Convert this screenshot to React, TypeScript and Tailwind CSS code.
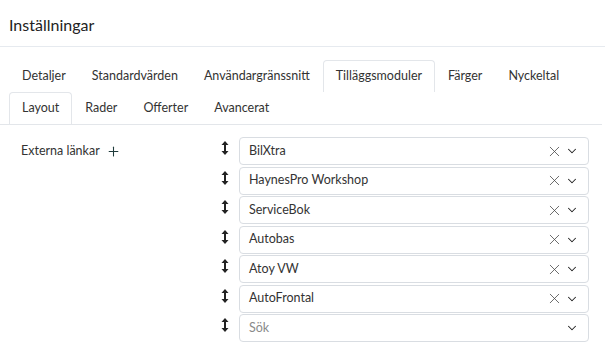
import { Plus, X, ChevronDown } from "lucide-react";

const row1 = ["Detaljer", "Standardvärden", "Användargränssnitt", "Tilläggsmoduler", "Färger", "Nyckeltal"];
const row2 = ["Layout", "Rader", "Offerter", "Avancerat"];
const links = ["BilXtra", "HaynesPro Workshop", "ServiceBok", "Autobas", "Atoy VW", "AutoFrontal"];

function Tab({ label, active }: { label: string; active: boolean }) {
  return (
    <div
      className={
        "h-[32px] px-[12px] flex items-center rounded-t-[4px] border border-b-0 " +
        (active ? "border-[#e3e6ea] bg-white" : "border-transparent")
      }
    >
      {label}
    </div>
  );
}

function Grip() {
  return (
    <svg width="8" height="14" viewBox="0 0 8 14" className="text-[#222]">
      <path d="M4 0 L7.5 4 L5 4 L5 10 L7.5 10 L4 14 L0.5 10 L3 10 L3 4 L0.5 4 Z" fill="currentColor" />
    </svg>
  );
}

function LinkRow({ value }: { value?: string }) {
  return (
    <div className="flex items-center mb-[1.5px]">
      <div className="w-[29px] flex justify-center pb-[6px]">
        <Grip />
      </div>
      <div className="flex-1 h-[28px] border border-[#d9dde2] rounded-[4px] bg-white flex items-center pl-[9px] pr-[9px]">
        <span className={"flex-1 " + (value ? "text-[#333]" : "text-[#8a8a8a]")}>{value ?? "Sök"}</span>
        {value && <X size={17} strokeWidth={1.1} className="text-[#444] mr-[2px]" />}
        <ChevronDown size={14} strokeWidth={1.8} className="text-[#222]" />
      </div>
    </div>
  );
}

export default function App() {
  return (
    <div
      className="w-[605px] h-[349px] bg-white text-[12.5px] text-[#333] overflow-hidden"
      style={{ fontFamily: "Lato, 'Open Sans', sans-serif" }}
    >
      <div className="h-[47px] border-b border-[#e6eaef] flex items-center px-[9px] pt-[3px]">
        <h1 className="text-[16px] text-[#222]">Inställningar</h1>
      </div>
      <div className="px-[9px] pt-[13px] mr-[3px]">
        <div className="flex">
          {row1.map((t) => (
            <Tab key={t} label={t} active={t === "Tilläggsmoduler"} />
          ))}
        </div>
        <div className="flex border-b border-[#e3e6ea] -mx-[9px] px-[9px]">
          {row2.map((t) => (
            <Tab key={t} label={t} active={t === "Layout"} />
          ))}
        </div>
      </div>
      <div className="flex pt-[12px] pl-[21px] pr-[16px]">
        <div className="w-[189px] flex items-center h-[28px] gap-[6px]">
          <span>Externa länkar</span>
          <Plus size={15} strokeWidth={1.7} className="text-[#1f3b3b]" />
        </div>
        <div className="flex-1">
          {links.map((l) => (
            <LinkRow key={l} value={l} />
          ))}
          <LinkRow />
        </div>
      </div>
    </div>
  );
}
